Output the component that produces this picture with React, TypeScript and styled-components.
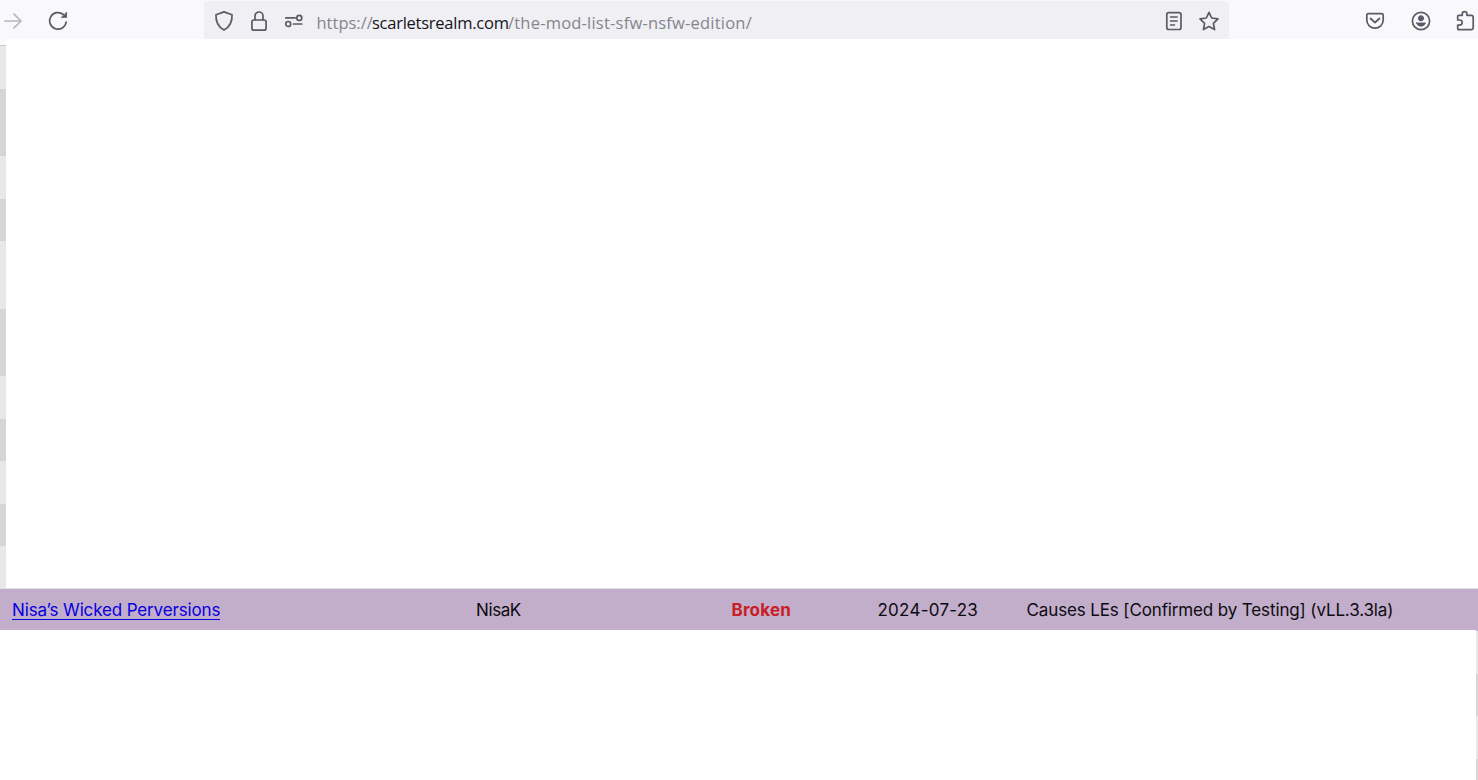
import React from "react";
import styled, { createGlobalStyle } from "styled-components";

const GlobalStyle = createGlobalStyle`
  * { box-sizing: border-box; }
  body { margin: 0; background: #fff; overflow: hidden; }
`;

const Page = styled.div`
  width: 1478px;
  height: 780px;
  display: flex;
  flex-direction: column;
  background: #fff;
  overflow: hidden;
`;

const Toolbar = styled.header`
  flex: none;
  height: 39px;
  display: flex;
  align-items: flex-end;
  background: #f9f9fb;
  color: #5b5b66;
`;

const NavButtons = styled.nav`
  width: 204px;
  height: 38px;
  display: flex;
  align-items: center;
  gap: 24px;
  padding: 2px 0 0 2px;
`;

const UrlBar = styled.div`
  width: 1025px;
  height: 38px;
  display: flex;
  align-items: center;
  padding: 0 9px 0 9px;
  border-radius: 4px 4px 0 0;
  background: #f0eff4;
`;

const SiteIcons = styled.div`
  display: flex;
  gap: 13px;
  width: 103.5px;
  padding-top: 2px;
`;

const Url = styled.div`
  flex: 1;
  display: flex;
  height: 38px;
  line-height: 43px;
  font-family: "Open Sans", "Noto Sans", sans-serif;
  font-size: 16.5px;
  white-space: nowrap;
`;

const UrlPart = styled.span<{ $strong?: boolean; $width: number; $spacing: number }>`
  flex: none;
  width: ${(p) => p.$width}px;
  letter-spacing: ${(p) => p.$spacing}px;
  color: ${(p) => (p.$strong ? "#15141a" : "#86858c")};
`;

const PageActions = styled.div`
  display: flex;
  gap: 13px;
  padding-top: 2px;
`;

const BrowserActions = styled.div`
  flex: none;
  height: 38px;
  display: flex;
  align-items: center;
  gap: 23.5px;
  margin-left: 135px;
  padding-top: 2px;
`;

const Glyph = styled.svg<{ $faded?: boolean }>`
  flex: none;
  width: 22px;
  height: 22px;
  display: block;
  fill: none;
  stroke: currentColor;
  stroke-width: 1.7;
  stroke-linecap: round;
  stroke-linejoin: round;
  opacity: ${(p) => (p.$faded ? 0.42 : 1)};
`;

const Content = styled.main`
  flex: none;
  height: 549px;
  display: flex;
`;

const Edge = styled.div<{ $width: number }>`
  flex: none;
  width: ${(p) => p.$width}px;
  display: flex;
  flex-direction: column;
`;

const EdgeTop = styled.div`
  height: 8px;
  background: #f9f9fb;
  border-bottom: 1px solid #cccccd;
`;

const Stripe = styled.div<{ $height: number; $dark?: boolean }>`
  flex: none;
  height: ${(p) => p.$height}px;
  background: ${(p) => (p.$dark ? "#d5d5d5" : "#e8e8e8")};
`;

const ModRow = styled.section`
  flex: none;
  height: 42px;
  display: grid;
  grid-template-columns: 464px 255.5px 146px 149px 1fr;
  padding-left: 12px;
  align-items: center;
  border-top: 1px solid #e3e1e5;
  background: #c2adcb;
  color: #0d0b10;
  font-family: Inter, sans-serif;
  font-size: 17px;
  line-height: 24px;
  white-space: nowrap;
`;

const Cell = styled.span<{ $spacing: number }>`
  letter-spacing: ${(p) => p.$spacing}px;
`;

const ModLink = styled.a`
  justify-self: start;
  height: 21px;
  line-height: 22px;
  letter-spacing: -0.14px;
  color: #0500e0;
  border-bottom: 1px solid #0500e0;
  text-decoration: none;
`;

const Status = styled(Cell)`
  color: #c81e24;
  font-weight: 650;
`;

const Footer = styled.footer`
  flex: 1;
  display: flex;
  justify-content: flex-end;
`;

const RowTail = styled.div`
  height: 1px;
  background: #c2adcb;
`;

const leftStripes = [43, 67, 43, 42, 68, 67, 43, 42, 43, 42, 42];
const leftDark = [1, 3, 5, 7, 9];
const rightStripes = [43, 42, 43, 21];

export default function App() {
  return (
    <Page>
      <GlobalStyle />
      <Toolbar>
        <NavButtons>
          <Glyph $faded viewBox="0 0 22 22"><path d="M3 11H19M12 4.2L19 11L12 17.8" /></Glyph>
          <Glyph viewBox="0 0 22 22">
            <path d="M18.2 12A8.3 8.3 0 1 1 15.3 4.5" />
            <path d="M18.6 2.4V7.4H13.6Z" fill="currentColor" strokeWidth="0.8" />
          </Glyph>
        </NavButtons>
        <UrlBar>
          <SiteIcons>
            <Glyph viewBox="0 0 22 22"><path d="M11 1.9L19 4.8Q19.6 15.5 11 20.1Q2.4 15.5 3 4.8Z" /></Glyph>
            <Glyph viewBox="0 0 22 22">
              <rect x="3.9" y="10" width="14.2" height="10.2" rx="2" />
              <path d="M7 9.8V6A4 4 0 0 1 15 6V9.8" />
            </Glyph>
            <Glyph viewBox="0 0 22 22">
              <path d="M2.8 7.9H12.2M10.5 14H18.8" />
              <circle cx="16.3" cy="7.9" r="2.5" />
              <circle cx="5.2" cy="14" r="2.5" />
            </Glyph>
          </SiteIcons>
          <Url>
            <UrlPart $width={55.5} $spacing={0}>https://</UrlPart>
            <UrlPart $strong $width={136} $spacing={-0.25}>scarletsrealm.com</UrlPart>
            <UrlPart $width={243} $spacing={0.21}>/the-mod-list-sfw-nsfw-edition/</UrlPart>
          </Url>
          <PageActions>
            <Glyph viewBox="0 0 22 22">
              <rect x="3.8" y="2.7" width="14.2" height="16.8" rx="2" />
              <path d="M7.5 6.9H14.2M7.5 11H14.2M7.5 15H11.5" strokeWidth="1.5" />
            </Glyph>
            <Glyph viewBox="0 0 22 22"><path d="M11 2.3L13.7 8L20 8.9L15.4 13.3L16.6 19.6L11 16.6L5.4 19.6L6.6 13.3L2 8.9L8.3 8Z" /></Glyph>
          </PageActions>
        </UrlBar>
        <BrowserActions>
          <Glyph viewBox="0 0 22 22">
            <path d="M4.5 3.7H17.5Q19.2 3.7 19.2 5.4V10A8.2 8.2 0 0 1 2.8 10V5.4Q2.8 3.7 4.5 3.7Z" />
            <path d="M6.5 8.5L11 12.5L15.5 8.5" />
          </Glyph>
          <Glyph viewBox="0 0 22 22">
            <circle cx="11" cy="11" r="8.6" />
            <circle cx="11" cy="8.3" r="2.6" fill="currentColor" strokeWidth="1" />
            <path d="M6.5 13H15.5Q14.3 16.2 11 16.2T6.5 13Z" fill="currentColor" strokeWidth="0.9" />
          </Glyph>
          <Glyph viewBox="0 0 22 22">
            <path d="M2.7 10V6.3Q2.7 5.3 3.7 5.3H7.3V3.9A2.2 2.2 0 0 1 11.9 3.9V5.3H16.3Q18.2 5.3 18.2 7V18.1Q18.2 19.6 16.5 19.6H3.7Q2.7 19.6 2.7 18.6V15.2H4.6A2.6 2.6 0 0 0 4.6 10Z" />
          </Glyph>
        </BrowserActions>
      </Toolbar>
      <Content>
        <Edge $width={6}>
          <EdgeTop />
          {leftStripes.map((h, i) => (
            <Stripe key={i} $height={h} $dark={leftDark.includes(i)} />
          ))}
        </Edge>
      </Content>
      <ModRow>
        <ModLink href="#">Nisa’s Wicked Perversions</ModLink>
        <Cell $spacing={-0.4}>NisaK</Cell>
        <Status $spacing={0.18}>Broken</Status>
        <Cell $spacing={0.25}>2024-07-23</Cell>
        <Cell $spacing={-0.13}>Causes LEs [Confirmed by Testing] (vLL.3.3la)</Cell>
      </ModRow>
      <Footer>
        <Edge $width={2}>
          <RowTail />
          {rightStripes.map((h, i) => (
            <Stripe key={i} $height={h} $dark={i % 2 === 1} />
          ))}
        </Edge>
      </Footer>
    </Page>
  );
}
